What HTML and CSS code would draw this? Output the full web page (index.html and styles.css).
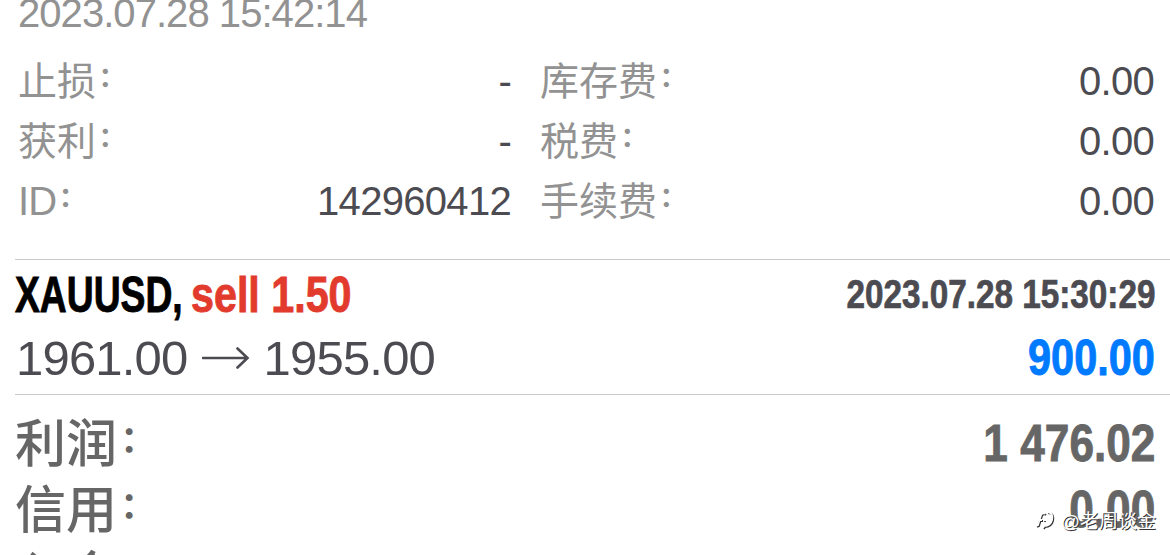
FILE: index.html
```
<!DOCTYPE html>
<html lang="zh-CN">
<head>
    <meta charset="utf-8">
    <title>History</title>
    <link rel="stylesheet" href="styles.css">
</head>
<body>
    <div class="history">
        <div class="closed-at">2023.07.28 15:42:14</div>

        <div class="details">
            <div class="label">止损<span class="colon">：</span></div>
            <div class="value">-</div>
            <div class="label">库存费<span class="colon">：</span></div>
            <div class="value">0.00</div>

            <div class="label">获利<span class="colon">：</span></div>
            <div class="value">-</div>
            <div class="label">税费<span class="colon">：</span></div>
            <div class="value">0.00</div>

            <div class="label"><span class="latin">ID</span><span class="colon">：</span></div>
            <div class="value">142960412</div>
            <div class="label">手续费<span class="colon">：</span></div>
            <div class="value">0.00</div>
        </div>

        <div class="deal">
            <div class="deal-row title-row">
                <div class="title"><span class="symbol">XAUUSD,</span><span class="side">sell 1.50</span></div>
                <div class="time">2023.07.28 15:30:29</div>
            </div>
            <div class="deal-row price-row">
                <div class="prices">
                    <span>1961.00</span>
                    <svg class="arrow" width="48" height="24" viewBox="0 0 48 24">
                        <path d="M1 12H45M35.500 2.500L45.500 12L35.500 21.500" />
                    </svg>
                    <span>1955.00</span>
                </div>
                <div class="profit">900.00</div>
            </div>
        </div>

        <div class="totals">
            <div class="total"><div class="total-label">利润<span class="colon">：</span></div><div class="total-value">1 476.02</div></div>
            <div class="total"><div class="total-label">信用<span class="colon">：</span></div><div class="total-value">0.00</div></div>
            <div class="total"><div class="total-label">入金<span class="colon">：</span></div></div>
        </div>
    </div>

    <div class="watermark">
        <svg width="20" height="22" viewBox="0 0 20 22">
            <path class="mark-shadow" d="M2 18L4 17L7 7C8 5 10 5 11 6M3 12H8M13 4C18 4 19 8 18 12C17 16 14 18 10 18L9 20M10 12V13" />
            <path class="mark" d="M1 17L3 16L6 6C7 4 9 4 10 5M2 11H7M12 3C17 3 18 7 17 11C16 15 13 17 9 17L8 19M9 11V12" />
        </svg>
        <span>@老周谈金</span>
    </div>
</body>
</html>
```

FILE: styles.css
```
body {
    margin: 0;
    background-color: #fff;
    color: #4b4b51;
    font-family: "Liberation Sans", "Noto Sans CJK SC", sans-serif;
}

.history {
    display: flow-root;
    height: 555px;
    overflow: hidden;
}

.closed-at {
    height: 51px;
    margin-top: -9px;
    padding-left: 18px;
    font-size: 40px;
    line-height: 44px;
    letter-spacing: -0.95px;
    color: #929292;
}

.details {
    display: grid;
    grid-template-columns: 200px 293px 238px 405px;
    grid-template-rows: repeat(3, 60px);
    padding: 9px 0 28px 18px;
    font-size: 40px;
    line-height: 60px;
}

.details .label:nth-child(4n + 3) {
    padding-left: 29px;
}

.label {
    font-family: "Noto Sans CJK SC", sans-serif;
    font-size: 39px;
    line-height: 54px;
    color: #929292;
}

.latin {
    font-family: "Liberation Sans", sans-serif;
    font-size: 40px;
    letter-spacing: -0.8px;
}

/* small raised colon, dots sit close together */
.colon {
    position: relative;
    top: -0.28em;
    margin-left: 0.09em;
    font-size: 0.7em;
    font-weight: 700;
    line-height: 1;
}

.value {
    text-align: right;
    letter-spacing: -0.7px;
}

.deal {
    height: 134px;
    margin-left: 15px;
    border-top: 1px solid #c8c7cc;
    border-bottom: 1px solid #c8c7cc;
}

.deal-row {
    display: flex;
    justify-content: space-between;
    padding-right: 15px;
}

.title-row {
    height: 68px;
    font-weight: 700;
    line-height: 70px;
}

.title {
    display: flex;
    font-size: 50px;
    -webkit-text-stroke: 0.9px;
}

/* condensed bold */
.symbol {
    width: 176px;
    color: #000;
    transform: scaleX(0.745);
    transform-origin: left;
}

.side {
    color: #e23b2e;
    white-space: nowrap;
    transform: scaleX(0.825);
    transform-origin: left;
}

.time {
    font-size: 40px;
    line-height: 68px;
    transform: scaleX(0.832);
    transform-origin: right;
    -webkit-text-stroke: 0.7px;
}

.price-row {
    height: 66px;
    line-height: 60px;
}

.prices {
    display: flex;
    align-items: center;
    height: 59px;
    padding-left: 1px;
    font-size: 49px;
    letter-spacing: -0.8px;
}

.arrow {
    margin: 0 14px;
    fill: none;
    stroke: #4b4b51;
    stroke-width: 2.6;
    stroke-linecap: round;
}

.profit {
    font-size: 50px;
    font-weight: 700;
    color: #007aff;
    transform: scaleX(0.83);
    transform-origin: right;
    -webkit-text-stroke: 0.9px;
}

.totals {
    padding: 15px 15px 0;
    font-weight: 700;
    color: #666;
}

.total {
    display: flex;
    justify-content: space-between;
    height: 66px;
    line-height: 66px;
}

.total-label {
    font-family: "Noto Sans CJK SC", sans-serif;
    font-size: 51px;
    font-weight: 500;
    line-height: 60px;
}

.total-value {
    font-size: 52px;
    transform: scaleX(0.85);
    transform-origin: right;
    -webkit-text-stroke: 0.9px;
}

.watermark {
    position: absolute;
    right: 14px;
    bottom: 22px;
    display: flex;
    align-items: center;
    gap: 4px;
    height: 28px;
    font-family: "Liberation Sans", "Noto Sans CJK SC", sans-serif;
    font-size: 19px;
    color: #fff;
    text-shadow: 1px 1px 0 #333;
}

.watermark svg {
    position: relative;
    top: 1px;
    left: -2px;
    fill: none;
    stroke-width: 1.8;
}

.mark {
    stroke: #fff;
}

.mark-shadow {
    stroke: #333;
}
```
